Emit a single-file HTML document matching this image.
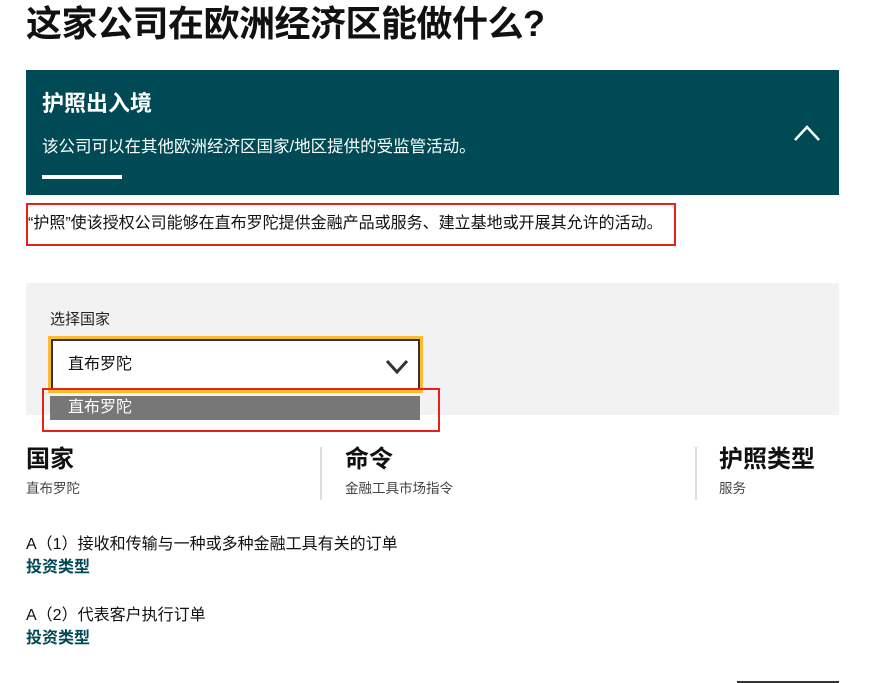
<!DOCTYPE html>
<html><head><meta charset="utf-8"><style>
*{margin:0;padding:0;box-sizing:border-box}
body{width:871px;height:683px;overflow:hidden;background:#fff;font-family:"Liberation Sans","Noto Sans CJK SC",sans-serif;color:#111;position:relative}
.a{position:absolute;white-space:nowrap;line-height:1}
</style></head><body>
<div class="a" style="left:26px;top:6px;font-size:36px;font-weight:bold;letter-spacing:-0.5px">这家公司在欧洲经济区能做什么?</div>
<div class="a" style="left:26px;top:70px;width:813px;height:125px;background:#004a55"></div>
<div class="a" style="left:42px;top:93px;font-size:22px;font-weight:bold;color:#fff">护照出入境</div>
<div class="a" style="left:42px;top:139px;font-size:16.5px;color:#fff">该公司可以在其他欧洲经济区国家/地区提供的受监管活动。</div>
<div class="a" style="left:42px;top:175px;width:80px;height:4px;background:#fff"></div>
<svg class="a" style="left:793px;top:124px" width="28" height="18"><path d="M2 16 L14 3 L26 16" stroke="#fff" stroke-width="2.5" fill="none"/></svg>
<div class="a" style="left:26px;top:203px;width:650px;height:43px;border:2px solid #e8201a"></div>
<div class="a" style="left:28px;top:216px;font-size:16px">“护照”使该授权公司能够在直布罗陀提供金融产品或服务、建立基地或开展其允许的活动。</div>
<div class="a" style="left:26px;top:283px;width:813px;height:132px;background:#f2f2f2"></div>
<div class="a" style="left:50px;top:312px;font-size:15px;color:#222">选择国家</div>
<div class="a" style="left:48px;top:336px;width:375px;height:57px;border:3px solid #fdbb30"></div>
<div class="a" style="left:51px;top:339px;width:369px;height:51px;border:2px solid #333;background:#fff"></div>
<div class="a" style="left:68px;top:357px;font-size:16px">直布罗陀</div>
<svg class="a" style="left:384px;top:358px" width="26" height="18"><path d="M3 3 L13 14 L23 3" stroke="#333" stroke-width="3" fill="none"/></svg>
<div class="a" style="left:50px;top:396px;width:370px;height:24px;background:#777"></div>
<div class="a" style="left:68px;top:400px;font-size:16px;color:#fff">直布罗陀</div>
<div class="a" style="left:42px;top:388px;width:398px;height:44px;border:2px solid #e8201a"></div>
<div class="a" style="left:26px;top:448px;font-size:24px;font-weight:bold">国家</div>
<div class="a" style="left:26px;top:482px;font-size:13.5px;color:#444">直布罗陀</div>
<div class="a" style="left:320px;top:447px;width:2px;height:53px;background:#ddd"></div>
<div class="a" style="left:345px;top:448px;font-size:24px;font-weight:bold">命令</div>
<div class="a" style="left:345px;top:482px;font-size:13.5px;color:#444">金融工具市场指令</div>
<div class="a" style="left:695px;top:447px;width:2px;height:53px;background:#ddd"></div>
<div class="a" style="left:719px;top:448px;font-size:24px;font-weight:bold">护照类型</div>
<div class="a" style="left:719px;top:482px;font-size:13.5px;color:#444">服务</div>
<div class="a" style="left:26px;top:537px;font-size:16px">A（1）接收和传输与一种或多种金融工具有关的订单</div>
<div class="a" style="left:26px;top:560px;font-size:16px;font-weight:bold;color:#004a55">投资类型</div>
<div class="a" style="left:26px;top:608px;font-size:16px">A（2）代表客户执行订单</div>
<div class="a" style="left:26px;top:631px;font-size:16px;font-weight:bold;color:#004a55">投资类型</div>
<div class="a" style="left:737px;top:681px;width:102px;height:2px;background:#333"></div>
</body></html>
